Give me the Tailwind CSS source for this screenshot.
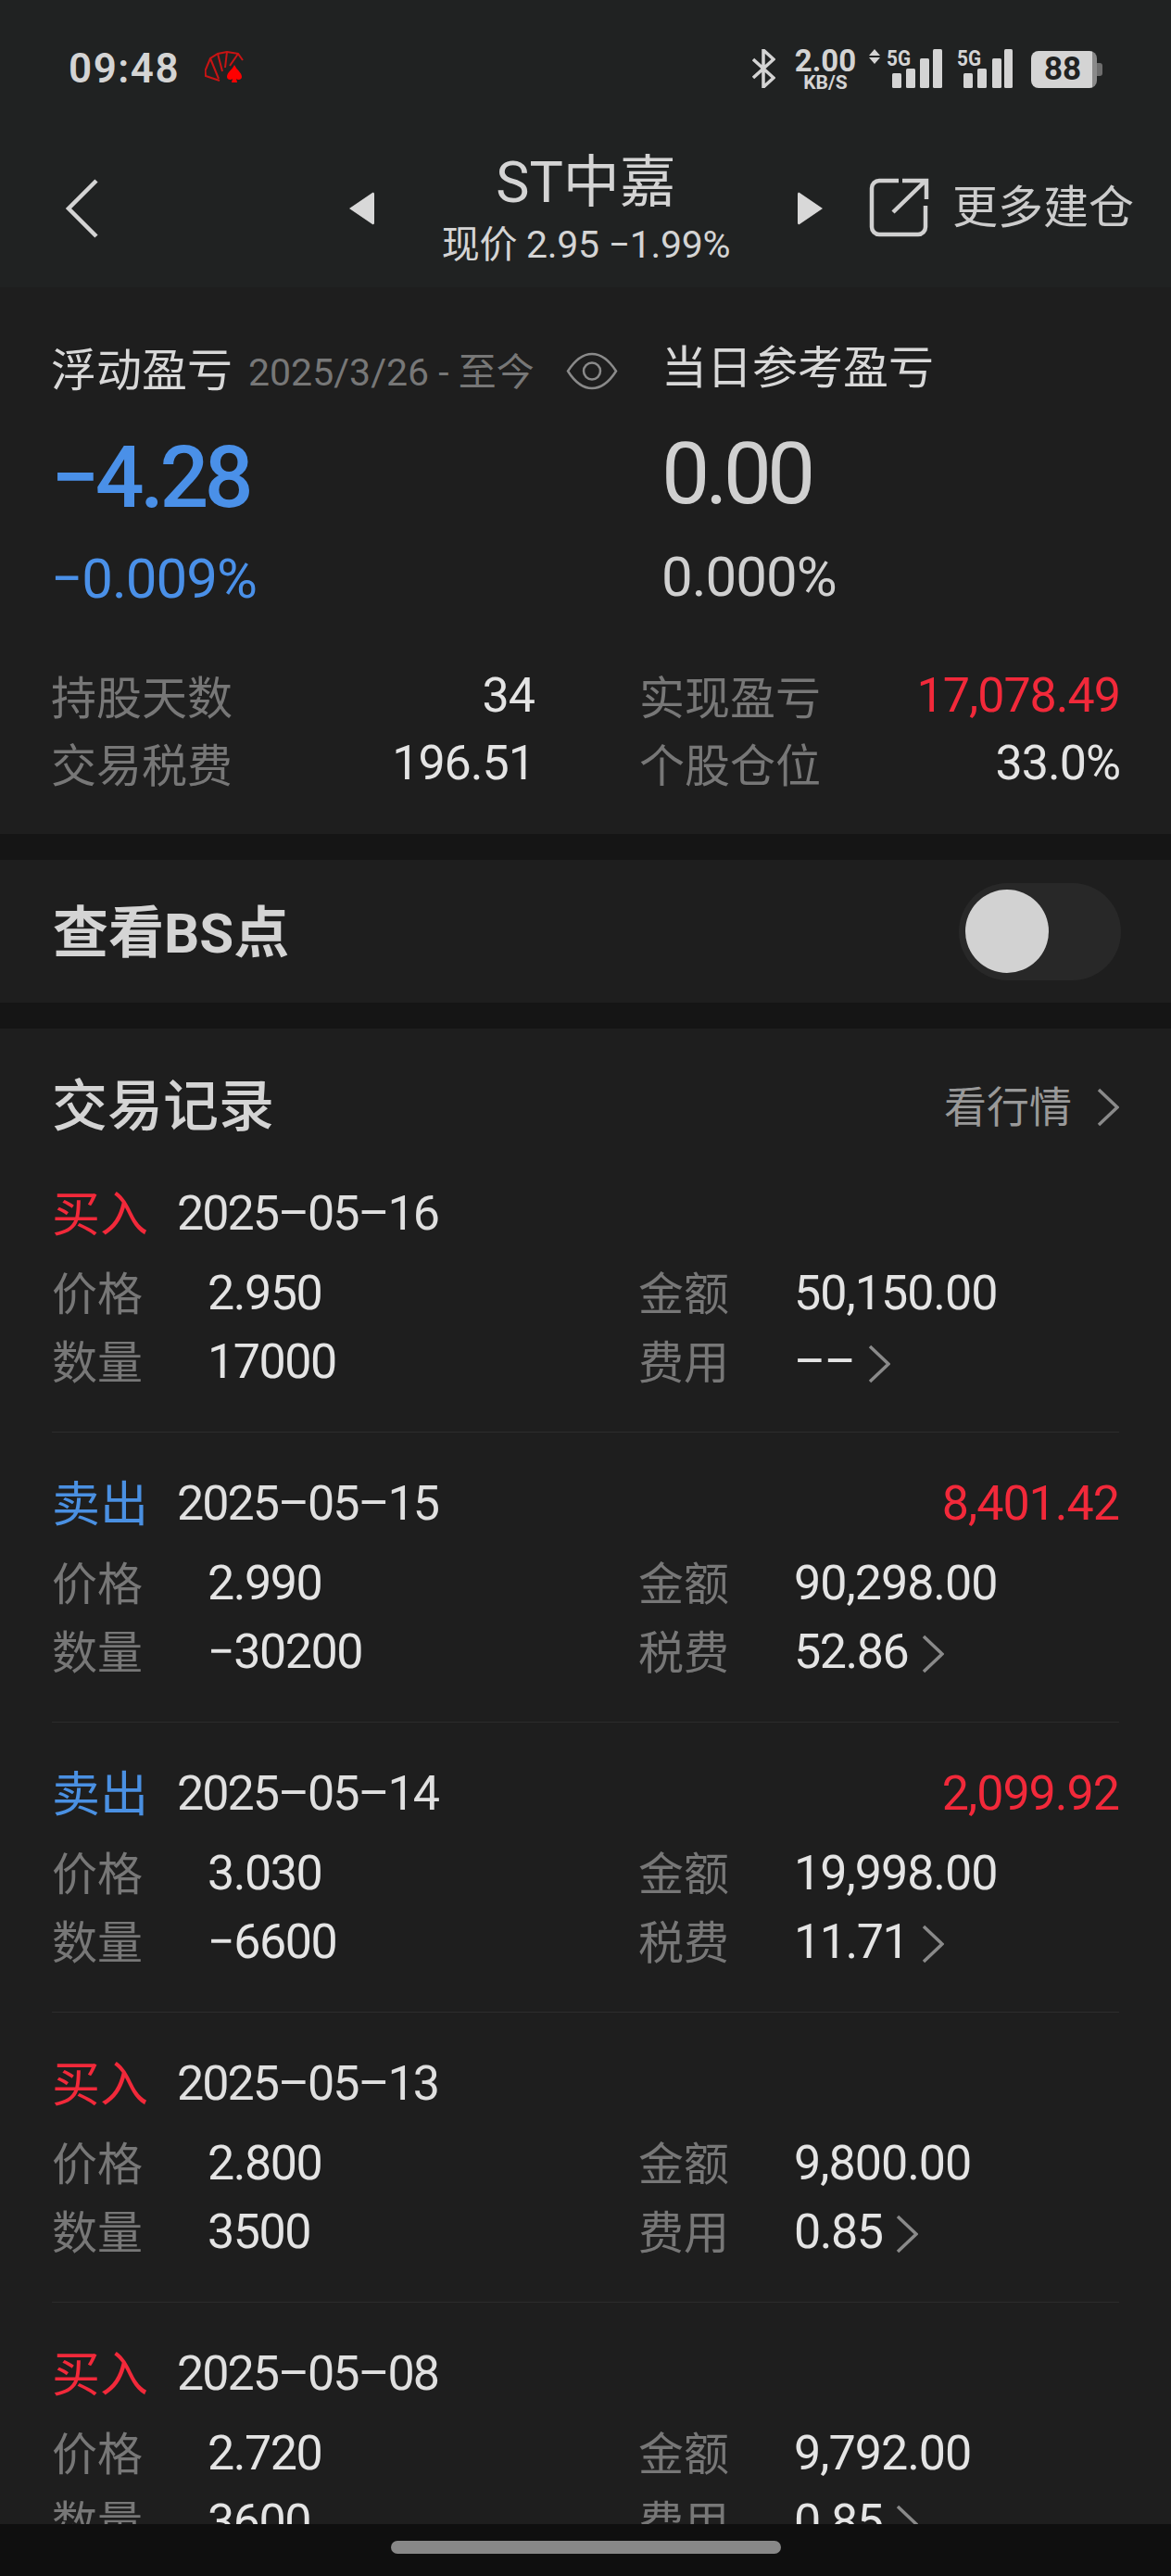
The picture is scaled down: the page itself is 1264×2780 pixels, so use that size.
<!DOCTYPE html>
<html lang="en">
<head>
    <meta charset="UTF-8">
    <meta name="viewport" content="width=device-width, initial-scale=1.0">
    <title>ST中嘉</title>
    <script src="https://cdn.jsdelivr.net/npm/@tailwindcss/browser@4"></script>
</head>
<body class="bg-[#1e1e1e] text-[#d4d4d4] font-['Roboto','Noto_Sans_CJK_SC',sans-serif]">
<div class="flex h-[2780px] w-[1264px] flex-col overflow-hidden">
    <!-- status bar + title bar -->
    <header class="h-[310px] shrink-0 bg-[#202222]">
        <div class="flex h-[148px] items-start justify-between pl-[74px] pr-[74px] pt-[50px]">
            <div class="flex items-center gap-[27px]">
                <span class="text-[44px] leading-[48px] font-semibold tracking-[1.500px]">09:48</span>
                <svg class="mt-[-4px]" width="42" height="34" viewBox="0 0 42 34" fill="none" stroke="#c81414" stroke-width="2"><path d="M16 32 1 27 .6 21 6 8 14 3 24 1 36 3 41 10"/><path d="M6 8l9 22M14 3l5 19M24 1l-2 17M36 3l-9 13"/><path fill="#f00" stroke="none" d="M32 15c2 5 8 8 8 13 0 3-4 4-6 2l1 4h-6l1-4c-2 2-6 1-6-2 0-5 6-8 8-13z"/></svg>
            </div>
            <div class="flex items-start">
                <svg class="mt-[3px]" width="25" height="42" viewBox="0 0 25 42" fill="none" stroke="#d4d4d4" stroke-width="3.5"><path d="M1 11 23 31 12 41V1l11 10L1 31"/></svg>
                <div class="ml-[20px] flex w-[68px] flex-col items-center font-bold">
                    <span class="mt-[1px] text-[33px] leading-[30px]">2.00</span>
                    <span class="text-[21px] leading-[16px]">KB/S</span>
                </div>
                <svg class="ml-[13px] mt-[3px] overflow-visible" width="78" height="42" viewBox="0 0 78 42" fill="#d4d4d4"><path d="M6 0l6 7H0zM6 16l6-7H0z"/><text x="19" y="18" font-size="24" font-weight="700" textLength="26" lengthAdjust="spacingAndGlyphs">5G</text><rect x="25" y="26" width="10" height="16" rx="1.5"/><rect x="40" y="21" width="10" height="21" rx="1.5"/><rect x="55" y="10" width="10" height="32" rx="1.5"/><rect x="69" y="0" width="10" height="42" rx="1.5"/></svg>
                <svg class="ml-[17px] mt-[3px] overflow-visible" width="60" height="42" viewBox="0 0 60 42" fill="#d4d4d4"><text x="0" y="18" font-size="24" font-weight="700" textLength="26" lengthAdjust="spacingAndGlyphs">5G</text><rect x="7" y="26" width="10" height="16" rx="1.5"/><rect x="22" y="21" width="10" height="21" rx="1.5"/><rect x="38" y="10" width="10" height="32" rx="1.5"/><rect x="51" y="0" width="9" height="42" rx="1.5"/></svg>
                <div class="ml-[20px] mt-[5px] flex items-center">
                    <div class="flex h-[40px] w-[71px] items-center justify-center rounded-[8px] bg-[linear-gradient(90deg,#d4d4d4_93%,#8a8a8a_93%)] pr-[3px] text-[35px] font-bold text-[#202222]">88</div>
                    <div class="h-[14px] w-[6px] rounded-r-[3px] bg-[#6e6e6e]"></div>
                </div>
            </div>
        </div>
        <div class="flex h-[153px] items-center">
            <svg class="ml-[70px]" width="36" height="64" viewBox="0 0 36 64" fill="none" stroke="#d4d4d4" stroke-width="4.5"><path d="M34 2 4 32l30 30"/></svg>
            <svg class="ml-[269px]" width="30" height="36" viewBox="0 0 30 36" fill="#d8d8d8"><path d="M2 18 27 1c1-.6 2 0 2 1.500v31c0 1.500-1 2.100-2 1.500z"/></svg>
            <div class="mt-[9px] flex w-[455px] flex-col items-center">
                <div class="text-[61px] leading-[70px]">ST中嘉</div>
                <div class="text-[41px] leading-[64px] tracking-[-0.300px]">现价 2.95 −1.99%</div>
            </div>
            <svg width="30" height="36" viewBox="0 0 30 36" fill="#d8d8d8"><path d="M28 18 3 1C2 .4 1 1 1 2.500v31c0 1.500 1 2.100 2 1.500z"/></svg>
            <svg class="ml-[47px] mt-[-2px]" width="66" height="66" viewBox="0 0 66 66" fill="none" stroke="#d0d0d0" stroke-width="4.500"><path d="M33 4H12a8 8 0 0 0-8 8v42a8 8 0 0 0 8 8h42a8 8 0 0 0 8-8V31"/><path d="M27 38 61 5M37 4h26v20"/></svg>
            <span class="ml-[25px] text-[49px] leading-[60px] text-[#cccccc]">更多建仓</span>
        </div>
    </header>

    <!-- holding summary -->
    <section class="h-[590px] shrink-0">
        <div class="flex h-[352px]">
            <div class="w-[714px] pl-[55px] pt-[61px]">
                <div class="flex h-[60px] items-center">
                    <span class="text-[49px] text-[#d8d8d8]">浮动盈亏</span>
                    <span class="ml-[17px] mt-[4px] text-[41px] text-[#777777]">2025/3/26 - 至今</span>
                    <svg class="ml-[34px] mt-[-2px]" width="56" height="41" viewBox="0 0 56 41" fill="none" stroke="#8a8a8a" stroke-width="2.500"><path d="M2 20.500C10 8 18 2 28 2s18 6 26 18.500C46 33 38 39 28 39S10 33 2 20.500z"/><circle cx="28" cy="20.500" r="9"/></svg>
                </div>
                <div class="mt-[35px] text-[93px] leading-[100px] font-medium tracking-[-4.500px] text-[#4a90e8]">−4.28</div>
                <div class="mt-[24px] text-[60px] leading-[70px] tracking-[-1px] text-[#4a90e8]">−0.009%</div>
            </div>
            <div class="pt-[58px]">
                <div class="h-[60px] text-[49px] leading-[60px] text-[#d8d8d8]">当日参考盈亏</div>
                <div class="mt-[34px] text-[93px] leading-[100px] font-[450] tracking-[-5px] text-[#d0d0d0]">0.00</div>
                <div class="mt-[26px] text-[60px] leading-[70px] tracking-[-1px] text-[#d0d0d0]">0.000%</div>
            </div>
        </div>
        <div class="grid grid-cols-[522px_519px] gap-x-[113px] pl-[55px] pt-[56px]">
            <div class="flex h-[73px] items-center justify-between"><span class="text-[49px] text-[#777777]">持股天数</span><span class="mt-[-8px] text-[52px] font-[450] tracking-[-1px] text-[#e4e4e4]">34</span></div>
            <div class="flex h-[73px] items-center justify-between"><span class="text-[49px] text-[#777777]">实现盈亏</span><span class="mt-[-8px] text-[52px] font-[450] tracking-[-1px] text-[#f2293a]">17,078.49</span></div>
            <div class="flex h-[73px] items-center justify-between"><span class="text-[49px] text-[#777777]">交易税费</span><span class="mt-[-8px] text-[52px] font-[450] tracking-[-1px] text-[#e4e4e4]">196.51</span></div>
            <div class="flex h-[73px] items-center justify-between"><span class="text-[49px] text-[#777777]">个股仓位</span><span class="mt-[-8px] text-[52px] font-[450] tracking-[-1px] text-[#e4e4e4]">33.0%</span></div>
        </div>
    </section>

    <!-- BS toggle -->
    <section class="my-[28px] flex h-[154px] shrink-0 items-center justify-between pl-[57px] pr-[54px] shadow-[0_-28px_0_#151515,0_28px_0_#151515]">
        <span class="mt-[6px] text-[60px] font-bold text-[#d4d4d4]">查看BS点</span>
        <div class="flex h-[105px] w-[175px] items-center rounded-full bg-[#282828] pl-[7px]">
            <div class="h-[90px] w-[90px] rounded-full bg-[#d2d2d2]"></div>
        </div>
    </section>

    <!-- trade records -->
    <section class="min-h-0 flex-1 overflow-hidden">
        <div class="flex h-[123px] justify-between pl-[56px] pr-[56px] pt-[50px]">
            <span class="h-[70px] text-[60px] leading-[70px] font-medium text-[#d4d4d4]">交易记录</span>
            <div class="flex h-[70px] items-center">
                <span class="text-[46px] text-[#999999]">看行情</span>
                <svg class="ml-[27px]" width="24" height="42" viewBox="0 0 24 42" fill="none" stroke="#8a8a8a" stroke-width="3.500"><path d="M2 2l20 19L2 40"/></svg>
            </div>
        </div>
        <div id="tradeList" class="ml-[56px] mr-[56px]"></div>
    </section>

    <!-- gesture bar -->
    <footer class="flex h-[56px] shrink-0 items-center justify-center bg-[#0f0f0f] pb-[7px]">
        <div class="h-[14px] w-[421px] rounded-full bg-[#888888]"></div>
    </footer>
</div>

<script>
    const trades = [
        { side: '买入', date: '2025–05–16', profit: '', price: '2.950', amount: '50,150.00', qty: '17000', feeLabel: '费用', fee: '––' },
        { side: '卖出', date: '2025–05–15', profit: '8,401.42', price: '2.990', amount: '90,298.00', qty: '−30200', feeLabel: '税费', fee: '52.86' },
        { side: '卖出', date: '2025–05–14', profit: '2,099.92', price: '3.030', amount: '19,998.00', qty: '−6600', feeLabel: '税费', fee: '11.71' },
        { side: '买入', date: '2025–05–13', profit: '', price: '2.800', amount: '9,800.00', qty: '3500', feeLabel: '费用', fee: '0.85' },
        { side: '买入', date: '2025–05–08', profit: '', price: '2.720', amount: '9,792.00', qty: '3600', feeLabel: '费用', fee: '0.85' }
    ];

    const chevron = `<svg class="ml-[15px]" width="24" height="42" viewBox="0 0 24 42" fill="none" stroke="#8a8a8a" stroke-width="3.500"><path d="M2 2l20 19L2 40"/></svg>`;

    // Two-column label/value cell of a record
    function cell(label, value, valueClass, extra = '') {
        return `
            <div class="flex h-[74px] items-center">
                <span class="w-[168px] shrink-0 text-[49px] text-[#777777]">${label}</span>
                <span class="mt-[-4px] text-[52px] font-[450] text-[#e4e4e4] ${valueClass}">${value}</span>${extra}
            </div>`;
    }

    document.getElementById('tradeList').innerHTML = trades.map(t => `
        <div class="border-b border-[#2c2c2c] pb-[36px] pt-[47px]">
            <div class="flex h-[60px] items-center justify-between">
                <div class="flex items-center">
                    <span class="mt-[4px] w-[135px] text-[52px] ${t.side === '买入' ? 'text-[#f2293a]' : 'text-[#4a90e2]'}">${t.side}</span>
                    <span class="text-[52px] font-[450] tracking-[-2px] text-[#e0e0e0]">${t.date}</span>
                </div>
                <span class="text-[52px] font-[450] tracking-[-1px] text-[#f2293a]">${t.profit}</span>
            </div>
            <div class="mt-[21px] grid grid-cols-[633px_1fr]">
                ${cell('价格', t.price, 'tracking-[-1.500px]')}
                ${cell('金额', t.amount, 'tracking-[-1px]')}
                ${cell('数量', t.qty, 'tracking-[-1.500px]')}
                ${cell(t.feeLabel, t.fee, 'tracking-[-1.500px]', chevron)}
            </div>
        </div>`).join('');
</script>
</body>
</html>
